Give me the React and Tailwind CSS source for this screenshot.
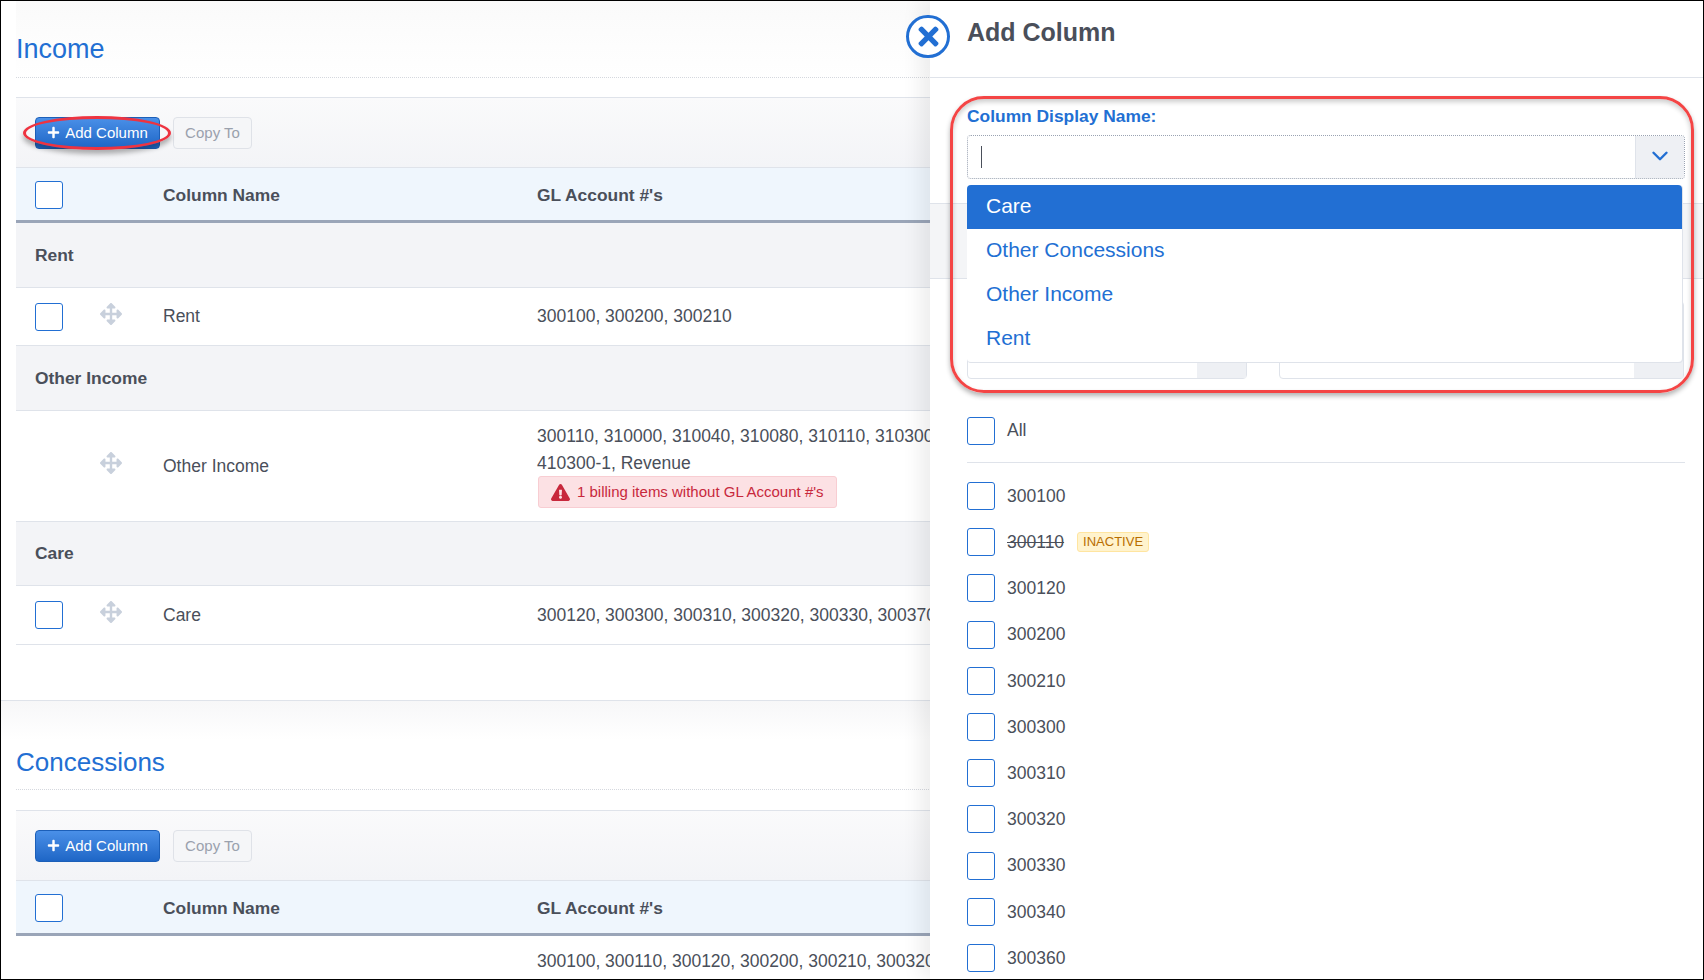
import React from "react";
import { FaArrowsAlt, FaExclamationTriangle, FaPlus, FaTimes } from "react-icons/fa";
import { ChevronDown } from "lucide-react";

const accounts = ["300100", "300110", "300120", "300200", "300210", "300300", "300310", "300320", "300330", "300340", "300360"];
const options = ["Other Concessions", "Other Income", "Rent"];

const Checkbox = () => (
  <span className="block h-7 w-7 shrink-0 rounded-[3px] border border-[#226fd3] bg-white" />
);

const DragHandle = () => <FaArrowsAlt className="mb-1.5 text-[22px] text-[#c8d0dc]" />;

const Toolbar = () => (
  <div className="flex h-[71px] items-center gap-[13px] border-y border-[#dfe3ea] bg-gradient-to-b from-[#fafafb] to-[#f3f4f7] pt-px pl-[19px]">
    <button className="flex h-8 w-[125px] items-center justify-center gap-[5px] rounded-[4px] border border-[#1c5fb8] bg-gradient-to-b from-[#4a90e8] to-[#1e66c6] text-[15px] text-white">
      <FaPlus className="mb-0.5 text-[13px]" />
      Add Column
    </button>
    <button className="h-8 w-[79px] rounded-[4px] border border-[#dfe2e8] bg-[#f5f6f8] text-[15px] text-[#9aa1ad]">
      Copy To
    </button>
  </div>
);

const HeaderRow = () => (
  <div className="grid h-[55px] grid-cols-[128px_374px_1fr] items-center border-b-[3px] border-[#9aa5b8] bg-[#eff6fd] pt-0.5 pl-[19px] text-[17.4px] font-bold">
    <Checkbox />
    <span>Column Name</span>
    <span>GL Account #'s</span>
  </div>
);

const GroupRow = ({ label, height }) => (
  <div className={`flex items-center border-b border-[#dfe3ea] bg-[#f3f4f7] pl-[19px] text-[17.4px] font-bold ${height}`}>
    {label}
  </div>
);

const ItemRow = ({ name, checkbox = true, height, children }) => (
  <div className={`grid grid-cols-[128px_374px_1fr] items-center border-b border-[#dfe3ea] pl-[19px] ${height}`}>
    <div className="flex items-center">
      <span className="w-[65px]">{checkbox && <Checkbox />}</span>
      <DragHandle />
    </div>
    <span>{name}</span>
    <div className="whitespace-nowrap">{children}</div>
  </div>
);

const SectionTitle = ({ children, size, lift }) => (
  <div className={`flex h-[50px] items-center border-b border-dotted border-[#d5d8de] ${lift}`}>
    <h2 className={`font-normal text-[#226fd3] ${size}`}>{children}</h2>
  </div>
);

const AddColumnPanel = () => (
  <div className="absolute top-0 right-0 bottom-0 left-[929px] bg-white shadow-[-10px_0_18px_rgba(0,0,0,0.07)]">
    <button className="absolute top-[14px] -left-[24px] flex h-[43px] w-[44px] items-center justify-center rounded-full border-[3px] border-[#226fd3] bg-white text-[29px] text-[#226fd3]">
      <FaTimes />
    </button>

    <div className="flex h-[77px] items-start border-b border-[#dfe3ea] pt-4 pl-[37px]">
      <h1 className="text-[25px] leading-[30px] font-bold">Add Column</h1>
    </div>

    <div className="relative">
      <div className="px-[37px] pt-7 pr-[18px]">
        <label className="block text-[17.4px] leading-5 font-bold text-[#226fd3]">Column Display Name:</label>
        <div className="mt-[9px] flex h-[44px] rounded-[4px] border border-dotted border-[#9aa3b2]">
          <div className="flex flex-1 items-center pl-[13px]">
            <span className="h-[22px] w-px bg-[#4a4f5a]" />
          </div>
          <div className="flex w-[49px] items-center justify-center rounded-r-[4px] border-l border-[#dfe3ea] bg-[#eef0f4] pb-0.5 text-[#226fd3]">
            <ChevronDown size={26} strokeWidth={2.25} />
          </div>
        </div>
      </div>

      <div className="mt-[24px] h-[76px] border-y border-[#dfe3ea] bg-[#f4f5f7]" />

      <div className="flex gap-[32px] pt-[22px] pr-[19px] pl-[37px]">
        <div className="flex h-[78px] w-[280px] justify-end rounded-[4px] border border-[#dfe3ea]">
          <span className="w-[49px] bg-[#eef0f4]" />
        </div>
        <div className="flex h-[78px] flex-1 justify-end rounded-[4px] border border-[#dfe3ea]">
          <span className="w-[49px] bg-[#eef0f4]" />
        </div>
      </div>

      <div className="absolute top-[107px] right-[21px] left-[37px] rounded-[4px] border-b border-[#dfe3ea] bg-white shadow-[1px_0_0_#dfe3ea]">
        <div className="flex h-[44px] items-center rounded-t-[4px] bg-[#226fd3] pb-0.5 pl-[19px] text-[21px] text-white">Care</div>
        {options.map((option) => (
          <div key={option} className="flex h-[44.3px] items-center pb-[3px] pl-[19px] text-[21px] text-[#226fd3]">
            {option}
          </div>
        ))}
      </div>
    </div>

    <div className="absolute top-[416px] right-[18px] left-[37px]">
      <div className="flex items-center gap-3 border-b border-[#dfe3ea] pb-[17px]">
        <Checkbox />
        <span className="-mt-px">All</span>
      </div>
      <div className="flex flex-col gap-[18.2px] pt-[19px]">
        {accounts.map((account) => (
          <div key={account} className="flex items-center gap-3">
            <Checkbox />
            <span className={account === "300110" ? "line-through" : ""}>{account}</span>
            {account === "300110" && (
              <span className="ml-px rounded-[3px] border border-[#ffe5a0] bg-[#fff3cd] px-[5px] text-[13px] leading-[18px] text-[#b86e00]">
                INACTIVE
              </span>
            )}
          </div>
        ))}
      </div>
    </div>

    {/* callout round the dropdown */}
    <div className="absolute top-[95px] left-[20px] h-[297px] w-[744px] rounded-[34px] border-[3px] border-[#f44545] shadow-[0_3px_5px_rgba(0,0,0,0.3),inset_0_3px_5px_rgba(0,0,0,0.2)]" />
  </div>
);

export default function App() {
  return (
    <div className="relative h-[980px] w-[1704px] overflow-hidden border border-black bg-white font-['Liberation_Sans',Arial,sans-serif] text-[17.5px] text-[#4a4f5a]">
      <div className="pl-[15px]">
        <div className="bg-gradient-to-b from-[#fafafa] to-white pt-[27px]">
          <SectionTitle size="text-[27px]" lift="pb-1.5">Income</SectionTitle>
        </div>
        <div className="mt-[19px]">
          <Toolbar />
          <HeaderRow />
          <GroupRow label="Rent" height="h-[65px]" />
          <ItemRow name="Rent" height="h-[58px]">300100, 300200, 300210</ItemRow>
          <GroupRow label="Other Income" height="h-[65px]" />
          <ItemRow name="Other Income" checkbox={false} height="h-[111px]">
            <div className="leading-[27px]">300110, 310000, 310040, 310080, 310110, 310300, 310310</div>
            <div className="leading-[27px]">410300-1, Revenue</div>
            <div className="-mt-px ml-px inline-flex h-8 items-center gap-[7px] rounded-[3px] border border-[#f8cdd2] bg-[#fce1e4] px-[12px] text-[15px] text-[#c8283c]">
              <FaExclamationTriangle className="text-[19px]" />
              1 billing items without GL Account #'s
            </div>
          </ItemRow>
          <GroupRow label="Care" height="h-[64px]" />
          <ItemRow name="Care" height="h-[59px]">300120, 300300, 300310, 300320, 300330, 300370, 300380</ItemRow>
        </div>
      </div>

      <div className="mt-[55px] h-[40px] border-t border-[#dfe3ea] bg-gradient-to-b from-[#f7f7f8] to-white" />

      <div className="pl-[15px]">
        <SectionTitle size="text-[26px]" lift="pb-1">Concessions</SectionTitle>
        <div className="mt-5">
          <Toolbar />
          <HeaderRow />
          <div className="grid h-[50px] grid-cols-[128px_374px_1fr] items-center whitespace-nowrap pl-[19px]">
            <span />
            <span />
            <span>300100, 300110, 300120, 300200, 300210, 300320, 300330</span>
          </div>
        </div>
      </div>

      <AddColumnPanel />

      {/* callout round the Add Column button */}
      <div className="absolute top-[115px] left-[22px] h-[34px] w-[148px] rounded-[50%] border-[3px] border-[#ee3340] shadow-[0_4px_5px_rgba(0,0,0,0.3)]" />
    </div>
  );
}
